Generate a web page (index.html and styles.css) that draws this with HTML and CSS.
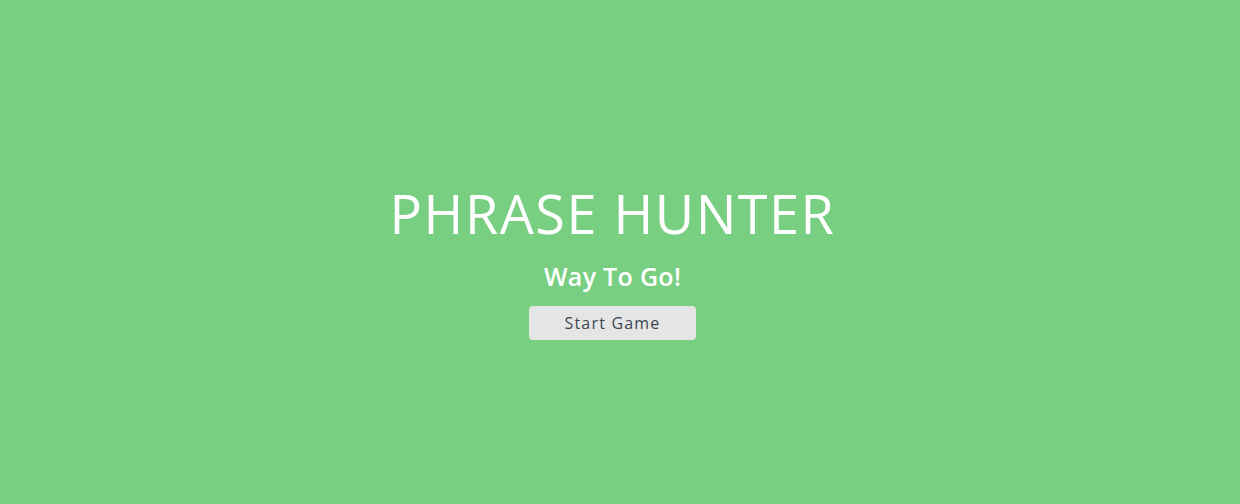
FILE: index.html
```html
<!DOCTYPE html>
<html lang="en">
<head>
<meta charset="utf-8">
<title>Phrase Hunter</title>
<link rel="stylesheet" href="styles.css">
</head>
<body>
<div class="overlay">
  <h2 class="title">PHRASE HUNTER</h2>
  <h1 class="game-over-message">Way To Go!</h1>
  <button class="btn-reset">Start Game</button>
</div>
</body>
</html>
```
FILE: styles.css
```css
html, body {
  margin: 0;
  padding: 0;
}
body {
  background: #78cf82;
  font-family: "Open Sans", "Liberation Sans", sans-serif;
}
.overlay {
  height: 504px;
  box-sizing: border-box;
  padding: 17px 15px 0 0;
  display: flex;
  flex-direction: column;
  align-items: center;
  justify-content: center;
  color: #fff;
}
.title {
  margin: 0;
  font-size: 54px;
  font-weight: 400;
  line-height: 64px;
  letter-spacing: 1.5px;
}
.game-over-message {
  margin: 15px 0 0;
  font-size: 25px;
  font-weight: 600;
  line-height: 32px;
  letter-spacing: 0.3px;
}
.btn-reset {
  margin-top: 14px;
  width: 167px;
  height: 34px;
  border: none;
  border-radius: 4px;
  background: #e5e5e5;
  color: #3b4651;
  font-family: "Open Sans", "Liberation Sans", sans-serif;
  font-size: 16px;
  letter-spacing: 1.2px;
  padding: 0;
}
```
